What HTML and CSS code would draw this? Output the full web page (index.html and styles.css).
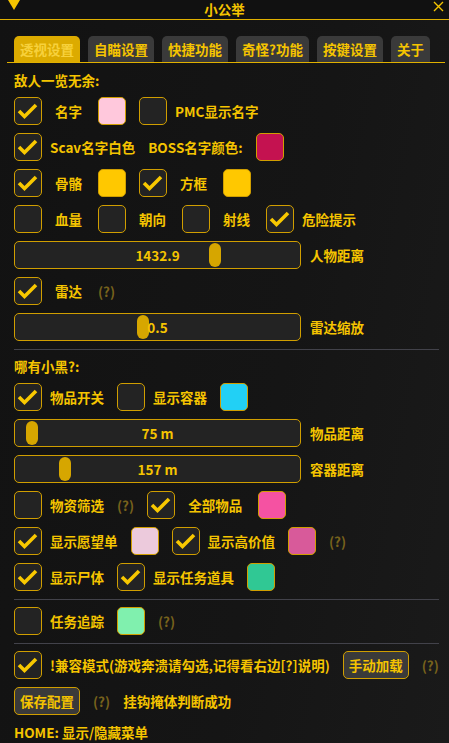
FILE: index.html
```html
<!DOCTYPE html>
<html lang="zh-CN">
<head>
    <meta charset="UTF-8">
    <meta name="viewport" content="width=device-width, initial-scale=1.0">
    <title>小公举</title>
    <link rel="stylesheet" href="styles.css">
</head>
<body>

<div class="titlebar">
    <svg class="collapse" width="12" height="10" viewBox="0 0 12 10"><polygon points="0,0 12,0 6,10"/></svg>
    <span class="title">小公举</span>
    <svg class="close" width="11" height="11" viewBox="0 0 11 11"><path d="M1 1 L10 10 M10 1 L1 10"/></svg>
</div>

<div class="tabbar">
    <div class="tab active">透视设置</div>
    <div class="tab">自瞄设置</div>
    <div class="tab">快捷功能</div>
    <div class="tab">奇怪?功能</div>
    <div class="tab">按键设置</div>
    <div class="tab">关于</div>
</div>

<div class="content">
    <div class="heading">敌人一览无余:</div>

    <div class="row">
        <span class="cb on"></span><span class="lbl sp">名字</span>
        <span class="sw" style="background:#ffc8dc"></span>
        <span class="cb"></span><span class="lbl tight">PMC显示名字</span>
    </div>
    <div class="row">
        <span class="cb on"></span><span class="lbl tight">Scav名字白色</span>
        <span class="lbl">BOSS名字颜色:</span>
        <span class="sw" style="background:#c41250"></span>
    </div>
    <div class="row">
        <span class="cb on"></span><span class="lbl sp">骨骼</span>
        <span class="sw" style="background:#ffc800"></span>
        <span class="cb on"></span><span class="lbl sp">方框</span>
        <span class="sw" style="background:#ffc800"></span>
    </div>
    <div class="row">
        <span class="cb"></span><span class="lbl sp">血量</span>
        <span class="cb"></span><span class="lbl sp">朝向</span>
        <span class="cb"></span><span class="lbl sp">射线</span>
        <span class="cb on"></span><span class="lbl tight">危险提示</span>
    </div>
    <div class="slider">
        <div class="track"><span class="grab" style="left:194px"></span><span class="val">1432.9</span></div>
        <span class="lbl">人物距离</span>
    </div>
    <div class="row">
        <span class="cb on"></span><span class="lbl sp">雷达</span>
        <span class="help">(?)</span>
    </div>
    <div class="slider">
        <div class="track"><span class="grab" style="left:122px"></span><span class="val">0.5</span></div>
        <span class="lbl">雷达缩放</span>
    </div>

    <div class="sep"></div>

    <div class="heading">哪有小黑?:</div>
    <div class="row">
        <span class="cb on"></span><span class="lbl tight">物品开关</span>
        <span class="cb"></span><span class="lbl tight">显示容器</span>
        <span class="sw" style="background:#22d0f5"></span>
    </div>
    <div class="slider">
        <div class="track"><span class="grab" style="left:11px"></span><span class="val">75 m</span></div>
        <span class="lbl">物品距离</span>
    </div>
    <div class="slider">
        <div class="track"><span class="grab" style="left:44px"></span><span class="val">157 m</span></div>
        <span class="lbl">容器距离</span>
    </div>
    <div class="row">
        <span class="cb"></span><span class="lbl tight">物资筛选</span>
        <span class="help">(?)</span>
        <span class="cb on"></span><span class="lbl sp">全部物品</span>
        <span class="sw" style="background:#f552a2"></span>
    </div>
    <div class="row">
        <span class="cb on"></span><span class="lbl tight">显示愿望单</span>
        <span class="sw" style="background:#eccadc"></span>
        <span class="cb on"></span><span class="lbl tight">显示高价值</span>
        <span class="sw" style="background:#d85a9a"></span>
        <span class="help">(?)</span>
    </div>
    <div class="row">
        <span class="cb on"></span><span class="lbl tight">显示尸体</span>
        <span class="cb on"></span><span class="lbl tight">显示任务道具</span>
        <span class="sw" style="background:#30c894"></span>
    </div>

    <div class="sep"></div>

    <div class="row">
        <span class="cb"></span><span class="lbl tight">任务追踪</span>
        <span class="sw" style="background:#80f0ae"></span>
        <span class="help">(?)</span>
    </div>

    <div class="sep"></div>

    <div class="row">
        <span class="cb on"></span><span class="lbl tight">!兼容模式(游戏奔溃请勾选,记得看右边[?]说明)</span>
        <span class="btn">手动加载</span>
        <span class="help">(?)</span>
    </div>
    <div class="row">
        <span class="btn">保存配置</span>
        <span class="help">(?)</span>
        <span class="lbl">挂钩掩体判断成功</span>
    </div>
    <div class="heading">HOME: 显示/隐藏菜单</div>
</div>

<script>
    // draw the check mark into every ticked box
    document.querySelectorAll(".cb.on").forEach(box => {
        box.innerHTML = '<svg width="26" height="26" viewBox="0 0 26 26"><polyline points="4,13 9.5,18.5 21,7"/></svg>';
    });
</script>

</body>
</html>
```

FILE: styles.css
```css
body {
    margin: 0;
    width: 449px;
    height: 743px;
    overflow: hidden;
    background: linear-gradient(100deg, #121212 0%, #151515 60%, #1a1a1a 100%);
    color: #f5c400;
    font-family: "Noto Sans CJK SC", "Noto Sans", sans-serif;
    font-size: 13.5px;
    font-weight: bold;
}
.titlebar {
    display: grid;
    grid-template-columns: 1fr auto 1fr;
    height: 19px;
    border-bottom: 1px solid #e0b000;
    background: #111111;
}
.collapse {
    fill: #f5c400;
    margin-left: 8px;
}
.title {
    line-height: 18px;
}
.close {
    justify-self: end;
    margin: 1px 5px 0 0;
    stroke: #f5c400;
    stroke-width: 1.4;
}
.tabbar {
    display: flex;
    gap: 8px;
    margin: 16px 4px 0 7px;
    padding-left: 7px;
    border-bottom: 1px solid #e0b000;
}
.tab {
    height: 26px;
    line-height: 26px;
    padding: 0 6px;
    background: #3a3a3a;
    border-radius: 5px 5px 0 0;
}
.tab.active {
    background: #dcab00;
    color: #f7d13c;
}
.content {
    display: flex;
    flex-direction: column;
    gap: 8px;
    padding: 8px 10px 0 14px;
}
.heading {
    line-height: 18px;
}
.row {
    display: flex;
    align-items: center;
    gap: 13px;
    height: 28px;
    white-space: nowrap;
}
.cb, .sw {
    flex: none;
    width: 28px;
    height: 28px;
    box-sizing: border-box;
    border: 1px solid #d09e00;
    border-radius: 5px;
    background: #232323;
}
.cb svg {
    display: block;
    fill: none;
    stroke: #f8c800;
    stroke-width: 3.6;
}
.lbl.tight {
    margin-left: -5px;
}
.lbl.sp {
    padding-right: 3px;
}
.help {
    color: #77621c;
}
.btn {
    height: 28px;
    line-height: 26px;
    box-sizing: border-box;
    padding: 0 5px;
    border: 1px solid #d09e00;
    border-radius: 5px;
    background: #3a3a3a;
}
.slider {
    display: flex;
    align-items: center;
    gap: 9px;
    height: 28px;
}
.track {
    position: relative;
    width: 287px;
    height: 28px;
    box-sizing: border-box;
    border: 1px solid #d09e00;
    border-radius: 5px;
    background: #232323;
    display: flex;
    align-items: center;
    justify-content: center;
}
.grab {
    position: absolute;
    top: 1px;
    width: 12px;
    height: 24px;
    border-radius: 6px;
    background: #d6a600;
}
.val {
    position: relative;
}
.sep {
    height: 1px;
    margin-bottom: -1px;
    background: #42424a;
}
```
